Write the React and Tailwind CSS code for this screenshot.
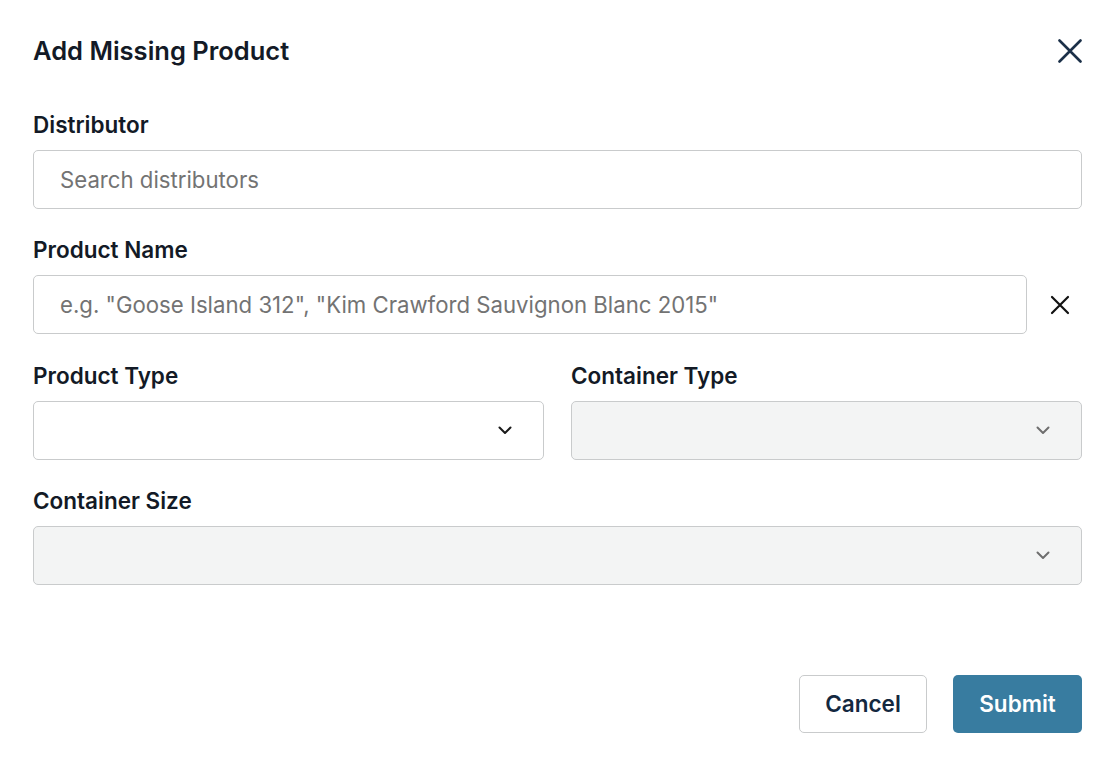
import React from 'react';

const font = { fontFamily: 'Inter, "Noto Sans", sans-serif' };

const Chevron = ({ muted }) => (
  <svg width="14" height="9" viewBox="0 0 14 9" fill="none" className="shrink-0">
    <path
      d="M1.5 1.5L7 7L12.5 1.5"
      stroke={muted ? '#6e6e6e' : '#1a1a1a'}
      strokeWidth="2"
      strokeLinecap="round"
      strokeLinejoin="round"
    />
  </svg>
);

const Label = ({ children }) => (
  <div className="text-[22.5px] leading-[24px] font-semibold text-[#131a26] mb-[13px]">{children}</div>
);

const Select = ({ disabled }) => (
  <div
    className={`h-[59px] rounded-[5px] border border-[#c9cbcc] flex items-center justify-end pr-[31px] ${
      disabled ? 'bg-[#f3f4f4]' : 'bg-white'
    }`}
  >
    <Chevron muted={disabled} />
  </div>
);

export default function App() {
  return (
    <div style={font} className="w-[1118px] h-[764px] bg-white pl-[33px] pr-[36px] pt-[35px]">
      <div className="flex items-center justify-between h-[32px]">
        <h1 className="text-[25.5px] leading-[32px] font-semibold text-[#131a26]">Add Missing Product</h1>
        <svg width="24" height="24" viewBox="0 0 24 24" fill="none">
          <path d="M1.5 1.5L22.5 22.5M22.5 1.5L1.5 22.5" stroke="#1b3048" strokeWidth="2.6" strokeLinecap="round" />
        </svg>
      </div>

      <div className="mt-[46px]">
        <Label>Distributor</Label>
        <div className="h-[59px] rounded-[5px] border border-[#c9cbcc] flex items-center px-[26px] text-[22.2px] text-[#737373]">
          Search distributors
        </div>
      </div>

      <div className="mt-[29px]">
        <Label>Product Name</Label>
        <div className="flex items-center">
          <div className="flex-1 h-[59px] rounded-[5px] border border-[#c9cbcc] flex items-center px-[26px] text-[22.2px] text-[#737373]">
            e.g. "Goose Island 312", "Kim Crawford Sauvignon Blanc 2015"
          </div>
          <div className="w-[55px] flex justify-end pr-[12px]">
            <svg width="20" height="20" viewBox="0 0 20 20" fill="none">
              <path d="M2 2L18 18M18 2L2 18" stroke="#111111" strokeWidth="2.2" strokeLinecap="round" />
            </svg>
          </div>
        </div>
      </div>

      <div className="mt-[30px] grid grid-cols-2 gap-[27px]">
        <div>
          <Label>Product Type</Label>
          <Select />
        </div>
        <div>
          <Label>Container Type</Label>
          <Select disabled />
        </div>
      </div>

      <div className="mt-[29px]">
        <Label>Container Size</Label>
        <Select disabled />
      </div>

      <div className="mt-[90px] flex justify-end gap-[26px]">
        <button className="w-[128px] h-[58px] rounded-[5px] border border-[#c9cbcc] bg-white text-[22.5px] font-semibold text-[#14283f]">
          Cancel
        </button>
        <button className="w-[129px] h-[58px] rounded-[5px] bg-[#387ca0] text-[22.5px] font-semibold text-white">
          Submit
        </button>
      </div>
    </div>
  );
}
